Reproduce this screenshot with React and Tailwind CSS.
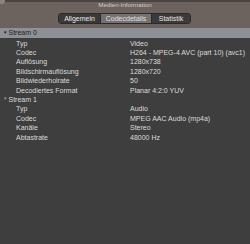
export default function App() {
  const font = { fontFamily: '"Liberation Sans", Arial, sans-serif' };
  const s0 = [
    ["Typ", "Video"],
    ["Codec", "H264 - MPEG-4 AVC (part 10) (avc1)"],
    ["Auflösung", "1280x738"],
    ["Bildschirmauflösung", "1280x720"],
    ["Bildwiederholrate", "50"],
    ["Decodiertes Format", "Planar 4:2:0 YUV"],
  ];
  const s1 = [
    ["Typ", "Audio"],
    ["Codec", "MPEG AAC Audio (mp4a)"],
    ["Kanäle", "Stereo"],
    ["Abtastrate", "48000 Hz"],
  ];
  const Row = ({ k, v }) => (
    <div className="flex h-[9.4px] items-center text-[7px] leading-none text-[#dcdcdc]">
      <div className="w-[130px] pl-[16px]">{k}</div>
      <div>{v}</div>
    </div>
  );
  return (
    <div className="w-[250px] h-[244px] bg-[#3e3e3e] flex flex-col overflow-hidden" style={font}>
      <div className="h-[28px] bg-[#6c625e] flex flex-col relative">
        <div className="absolute left-[-2px] top-[-3px] w-[7px] h-[7px] rounded-full bg-[#8a8280]" />
        <div className="h-[2px] bg-[#4a4442]" />
        <div className="h-[6px] flex items-center justify-center text-[6.2px] leading-none text-[#d6cfcc]">
          Medien-Information
        </div>
        <div className="mt-[5px] flex justify-center">
          <div className="flex h-[11px] ml-[-1px] rounded-[3px] border border-[#2c2a2a] overflow-hidden text-[7px] leading-none">
            <div className="w-[41px] flex items-center justify-center bg-[#3b3838] text-[#e8e8e8]">Allgemein</div>
            <div className="w-[52px] flex items-center justify-center bg-[#757170] text-[#e0e0e0] border-x border-[#2c2a2a]">Codecdetails</div>
            <div className="w-[38px] flex items-center justify-center bg-[#3d3a3a] text-[#e8e8e8]">Statistik</div>
          </div>
        </div>
      </div>
      <div className="h-[9.5px] bg-[#8d9197] flex items-center text-[7px] leading-none text-[#1c1c1c]">
        <span className="pl-[3px] pr-[1px] text-[4.5px]">▼</span>
        <span>Stream 0</span>
      </div>
      <div className="pt-[1px]">
        {s0.map(([k, v]) => <Row key={k} k={k} v={v} />)}
        <div className="flex h-[9.4px] items-center text-[7px] leading-none text-[#dcdcdc]">
          <span className="pl-[3px] pr-[1px] text-[4.5px] text-[#9a9a9a]">▼</span>
          <span>Stream 1</span>
        </div>
        {s1.map(([k, v]) => <Row key={k + "1"} k={k} v={v} />)}
      </div>
    </div>
  );
}
